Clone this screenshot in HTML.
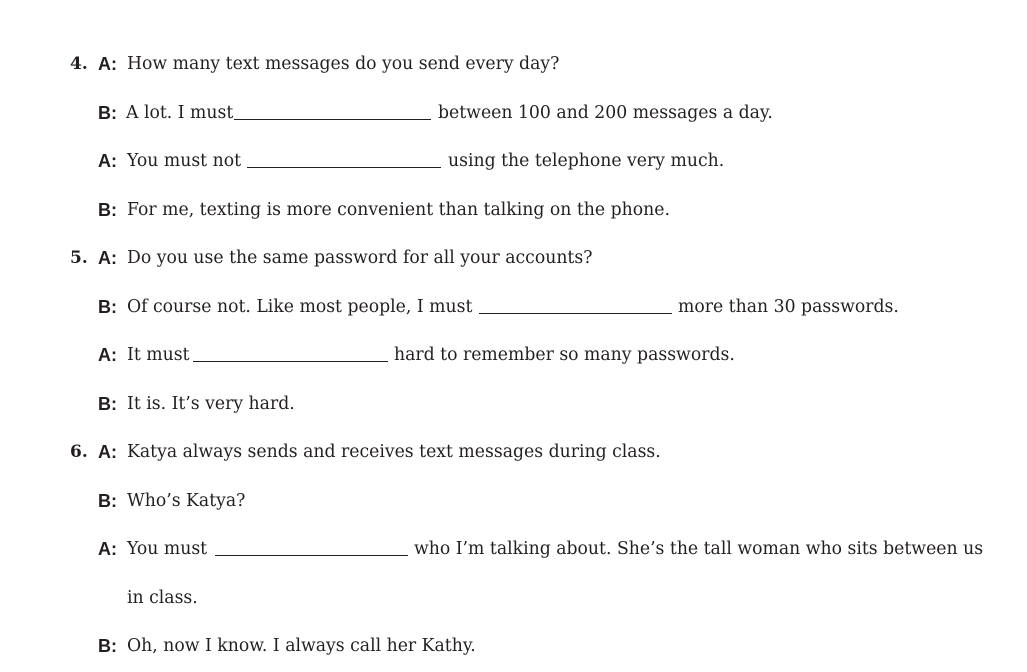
<!DOCTYPE html>
<html><head><meta charset="utf-8"><style>
html,body{margin:0;padding:0;background:#fff;}
body{width:1027px;height:672px;position:relative;overflow:hidden;color:#231f20;}
.t{position:absolute;font-family:"DejaVu Serif",serif;font-size:17.25px;line-height:22px;white-space:nowrap;}
.n{font-weight:bold;font-size:17px;}
.s{position:absolute;font-family:"Liberation Sans",sans-serif;font-weight:bold;font-size:18px;line-height:22px;}
.b{position:absolute;height:1px;background:#231f20;}
</style></head><body>
<div class="t n" style="left:70px;top:53px">4.</div>
<div class="s" style="left:98px;top:53px">A:</div>
<div class="t" style="left:127px;top:53px">How many text messages do you send every day?</div>

<div class="s" style="left:98px;top:102px">B:</div>
<div class="t" style="left:126px;top:102px">A lot. I must</div>
<div class="b" style="left:234px;width:197px;top:119px"></div>
<div class="t" style="left:438px;top:102px">between 100 and 200 messages a day.</div>

<div class="s" style="left:98px;top:150px">A:</div>
<div class="t" style="left:127px;top:150px">You must not</div>
<div class="b" style="left:247px;width:194px;top:167px"></div>
<div class="t" style="left:448px;top:150px">using the telephone very much.</div>

<div class="s" style="left:98px;top:199px">B:</div>
<div class="t" style="left:127px;top:199px">For me, texting is more convenient than talking on the phone.</div>

<div class="t n" style="left:70px;top:247px">5.</div>
<div class="s" style="left:98px;top:247px">A:</div>
<div class="t" style="left:127px;top:247px">Do you use the same password for all your accounts?</div>

<div class="s" style="left:98px;top:296px">B:</div>
<div class="t" style="left:127px;top:296px">Of course not. Like most people, I must</div>
<div class="b" style="left:479px;width:193px;top:313px"></div>
<div class="t" style="left:678px;top:296px">more than 30 passwords.</div>

<div class="s" style="left:98px;top:344px">A:</div>
<div class="t" style="left:127px;top:344px">It must</div>
<div class="b" style="left:193px;width:195px;top:361px"></div>
<div class="t" style="left:394px;top:344px">hard to remember so many passwords.</div>

<div class="s" style="left:98px;top:393px">B:</div>
<div class="t" style="left:127px;top:393px">It is. It’s very hard.</div>

<div class="t n" style="left:70px;top:441px">6.</div>
<div class="s" style="left:98px;top:441px">A:</div>
<div class="t" style="left:127px;top:441px">Katya always sends and receives text messages during class.</div>

<div class="s" style="left:98px;top:490px">B:</div>
<div class="t" style="left:127px;top:490px">Who’s Katya?</div>

<div class="s" style="left:98px;top:538px">A:</div>
<div class="t" style="left:127px;top:538px">You must</div>
<div class="b" style="left:215px;width:193px;top:555px"></div>
<div class="t" style="left:414px;top:538px">who I’m talking about. She’s the tall woman who sits between us</div>

<div class="t" style="left:127px;top:587px">in class.</div>

<div class="s" style="left:98px;top:635px">B:</div>
<div class="t" style="left:127px;top:635px">Oh, now I know. I always call her Kathy.</div>
</body></html>
